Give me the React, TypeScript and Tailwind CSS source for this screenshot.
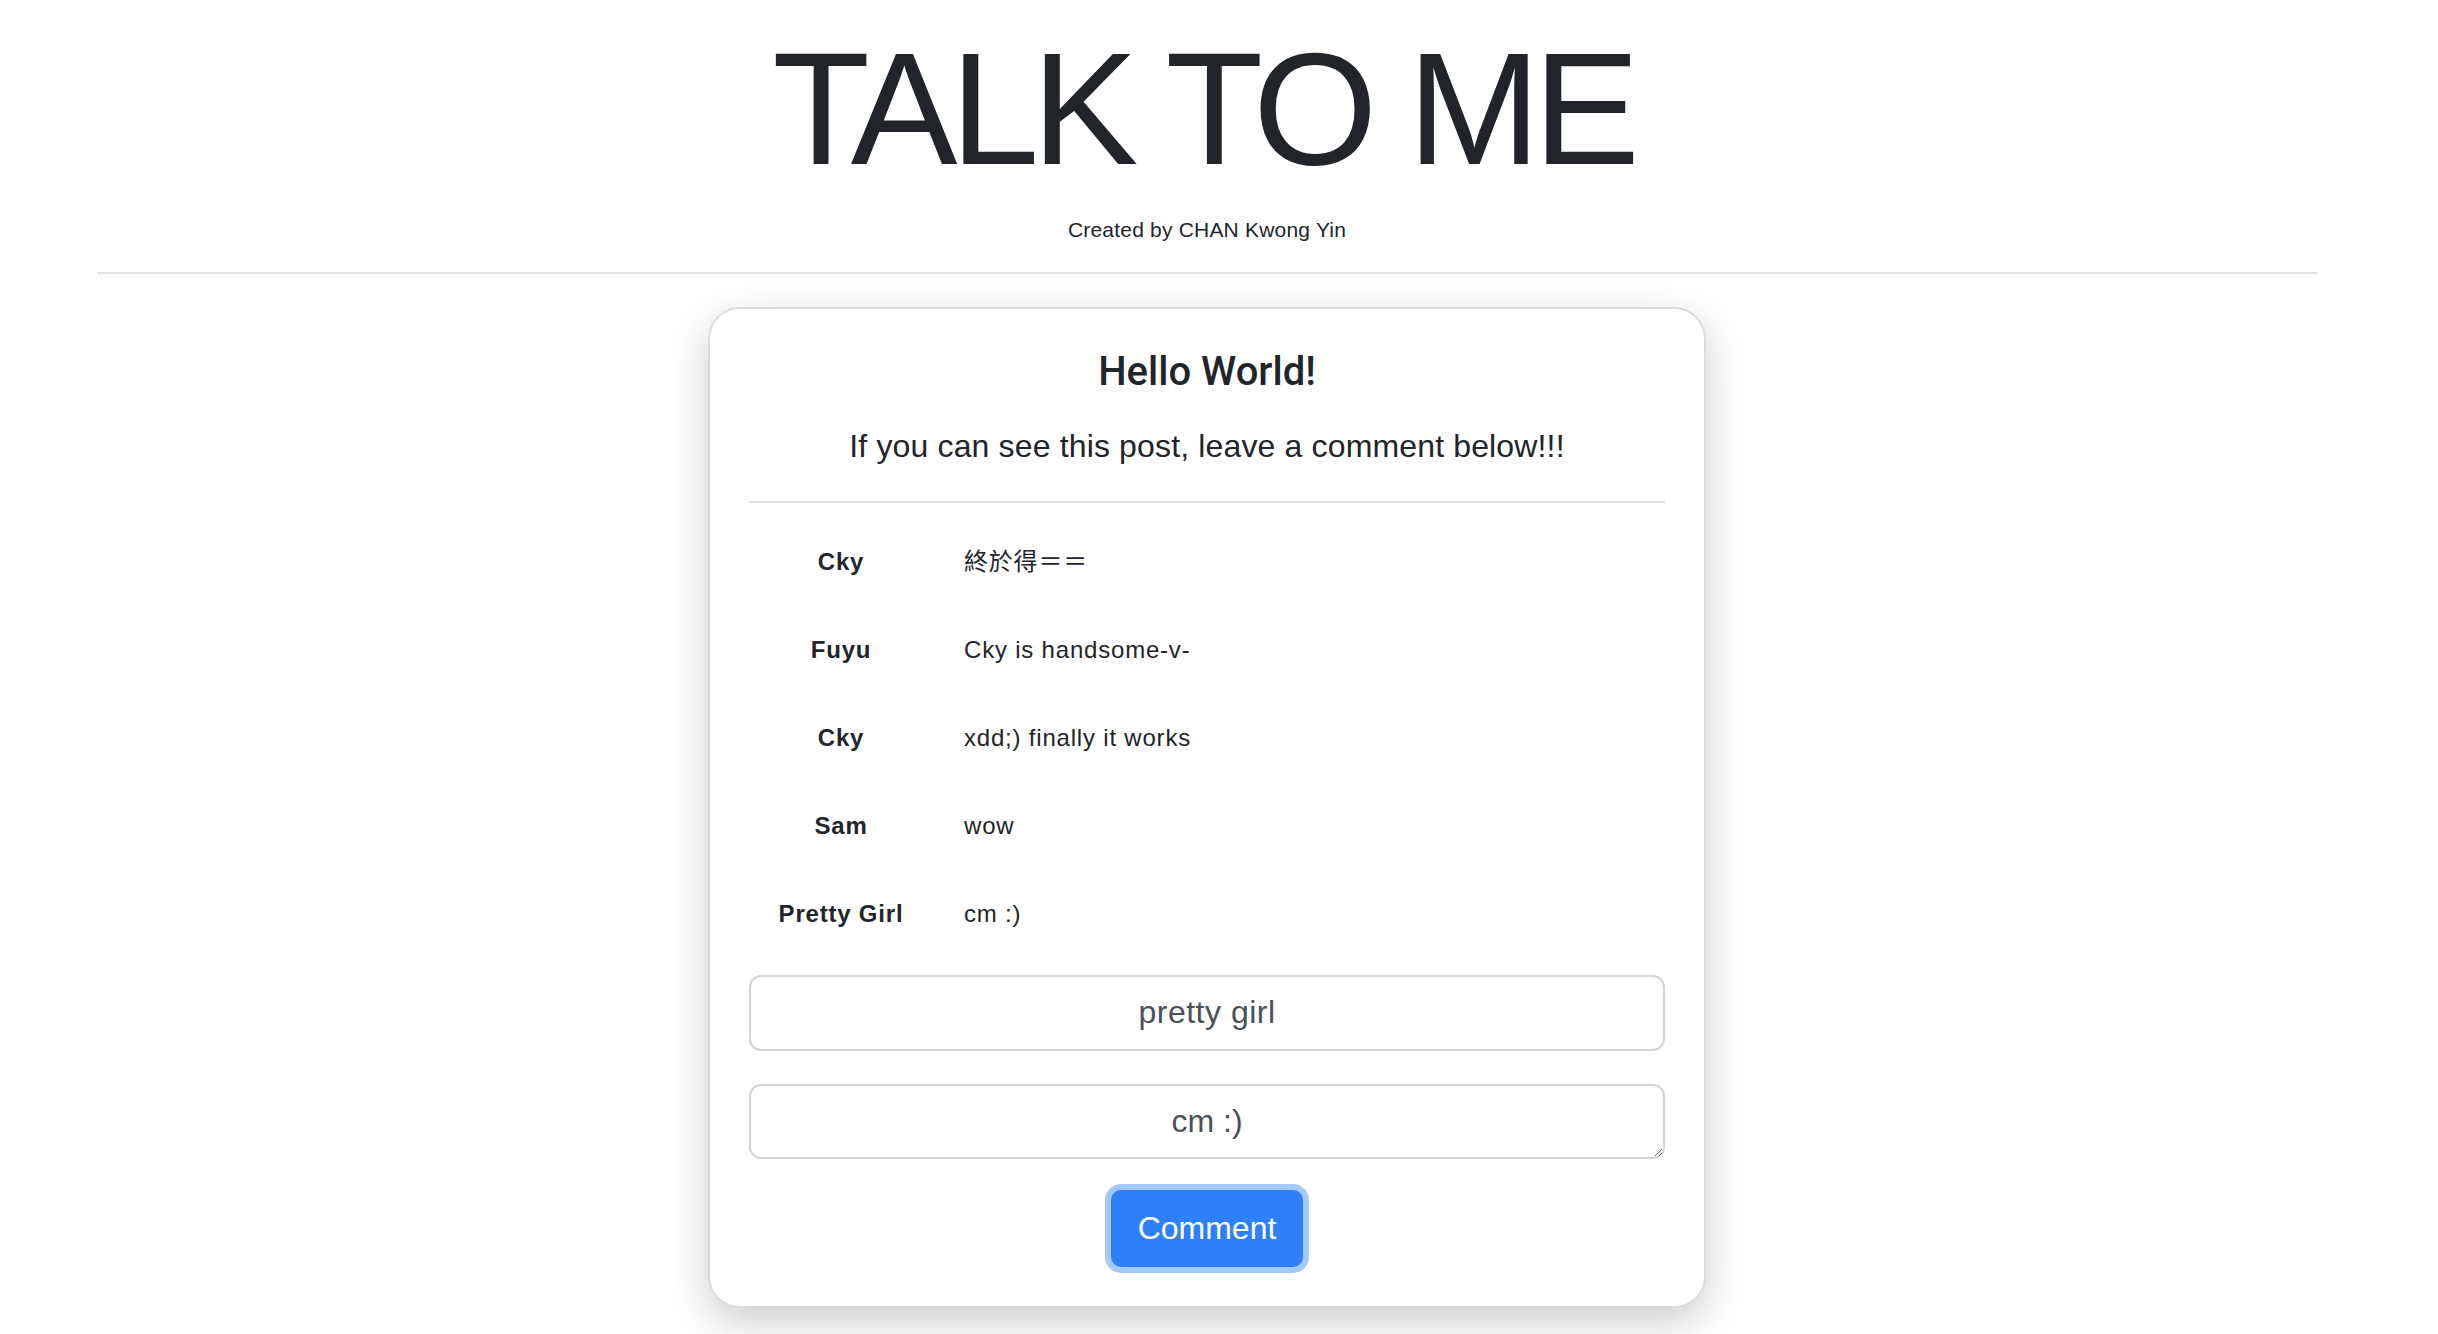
import React from "react";

const comments: [string, string][] = [
  ["Cky", "終於得＝＝"],
  ["Fuyu", "Cky is handsome-v-"],
  ["Cky", "xdd;) finally it works"],
  ["Sam", "wow"],
  ["Pretty Girl", "cm :)"],
];

export default function App() {
  return (
    <div className="min-h-screen bg-white pr-6 font-['Liberation_Sans','Noto_Sans_CJK_TC',Arial,sans-serif] text-[#212529]">
      <h1 className="mt-[13px] pr-[9px] text-center text-[160px] leading-[192px] font-normal tracking-[-7.3px]">
        TALK TO ME
      </h1>
      <p className="mt-[9px] text-center text-[21px] leading-[31.5px] font-medium tracking-[0.2px]">
        Created by CHAN Kwong Yin
      </p>
      <div className="mx-auto mt-[26px] h-[2px] w-[2220px] bg-[#e3e3e3]" />

      <div className="mx-auto mt-[33px] w-[998px] rounded-[32px] border-2 border-[#dcdcdc] bg-white p-[39px] shadow-[0_14px_40px_rgba(0,0,0,0.2)]">
        <h5 className="text-center text-[40px] leading-[48px] font-medium font-['Roboto',sans-serif]">
          Hello World!
        </h5>
        <p className="mt-[26px] text-center text-[32px] leading-[48px] tracking-[0.15px]">
          If you can see this post, leave a comment below!!!
        </p>
        <div className="mt-[31px] h-[2px] w-full bg-[#e0e0e0]" />

        <div className="mt-[15px] flex flex-col">
          {comments.map(([name, text], i) => (
            <div key={i} className="flex h-[88px] items-center text-[24px] tracking-[0.8px]">
              <div className="w-[184px] text-center font-bold">{name}</div>
              <div className="pl-[31px]">{text}</div>
            </div>
          ))}
        </div>

        <input
          readOnly
          value="pretty girl"
          className="mt-[17px] block h-[76px] w-full rounded-[12px] border-2 border-[#ced4da] bg-white px-6 text-center text-[32px] tracking-[0.5px] text-[#495057] outline-none"
        />
        <textarea
          readOnly
          rows={1}
          value="cm :)"
          className="mt-[33px] block h-[75px] w-full resize-y rounded-[12px] border-2 border-[#ced4da] bg-white px-6 py-[11px] text-center text-[32px] leading-[48px] text-[#495057] outline-none"
        />
        <div className="mt-[31px] flex justify-center">
          <button className="h-[77px] w-[192px] rounded-[10px] bg-[#2f7ff6] text-[32px] text-white shadow-[0_0_0_6px_#a3c8fb]">
            Comment
          </button>
        </div>
      </div>
    </div>
  );
}
